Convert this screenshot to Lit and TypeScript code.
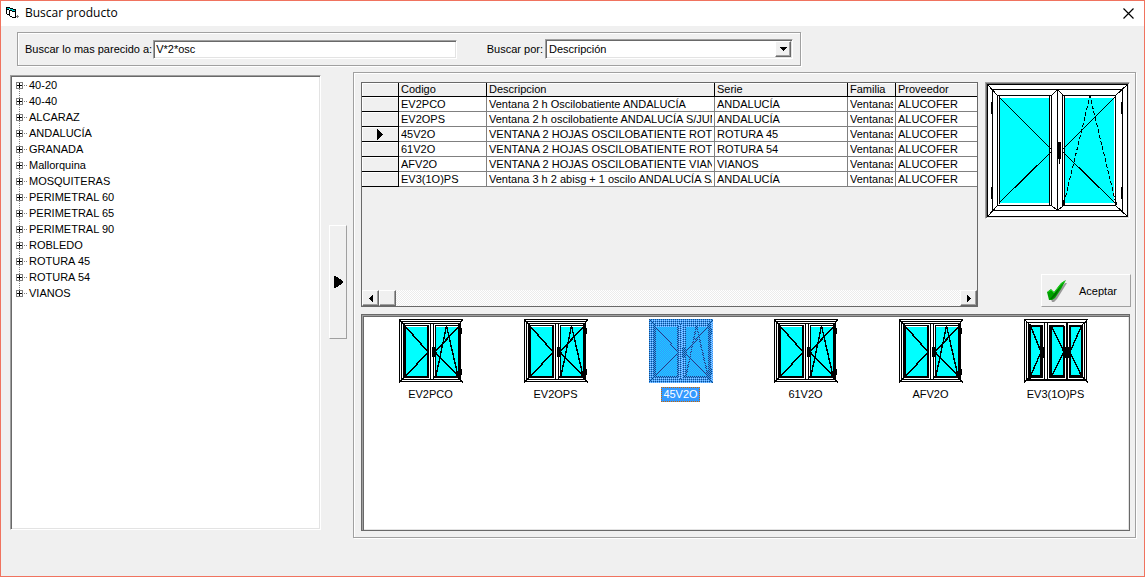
import { LitElement, html, svg, css } from "lit";
import { customElement, property, state } from "lit/decorators.js";
import { classMap } from "lit/directives/class-map.js";

interface Producto {
  codigo: string;
  descripcion: string;
  serie: string;
  familia: string;
  proveedor: string;
  hojas: 2 | 3;
}

const SERIES = [
  "40-20", "40-40", "ALCARAZ", "ANDALUCÍA", "GRANADA", "Mallorquina", "MOSQUITERAS",
  "PERIMETRAL 60", "PERIMETRAL 65", "PERIMETRAL 90", "ROBLEDO", "ROTURA 45", "ROTURA 54", "VIANOS",
];

const PRODUCTOS: Producto[] = [
  { codigo: "EV2PCO", descripcion: "Ventana 2 h Oscilobatiente ANDALUCÍA", serie: "ANDALUCÍA", familia: "Ventanas", proveedor: "ALUCOFER", hojas: 2 },
  { codigo: "EV2OPS", descripcion: "Ventana 2 h oscilobatiente ANDALUCÍA S/JUN", serie: "ANDALUCÍA", familia: "Ventanas", proveedor: "ALUCOFER", hojas: 2 },
  { codigo: "45V2O", descripcion: "VENTANA 2 HOJAS OSCILOBATIENTE ROTU", serie: "ROTURA 45", familia: "Ventanas", proveedor: "ALUCOFER", hojas: 2 },
  { codigo: "61V2O", descripcion: "VENTANA 2 HOJAS OSCILOBATIENTE ROTU", serie: "ROTURA 54", familia: "Ventanas", proveedor: "ALUCOFER", hojas: 2 },
  { codigo: "AFV2O", descripcion: "VENTANA 2 HOJAS OSCILOBATIENTE VIAN", serie: "VIANOS", familia: "Ventanas", proveedor: "ALUCOFER", hojas: 2 },
  { codigo: "EV3(1O)PS", descripcion: "Ventana 3 h 2 abisg + 1 oscilo ANDALUCÍA S/", serie: "ANDALUCÍA", familia: "Ventanas", proveedor: "ALUCOFER", hojas: 3 },
];

/** Small 64x64 elevation of a window with two or three leaves. */
@customElement("window-thumb")
export class WindowThumb extends LitElement {
  @property({ type: Number }) hojas = 2;
  @property({ type: Boolean, reflect: true }) selected = false;

  static styles = css`
    :host { display: block; position: relative; width: 64px; height: 64px; }
    svg { display: block; }
    :host([selected])::after {
      content: "";
      position: absolute;
      inset: 0;
      background:
        repeating-conic-gradient(#39f 0 25%, transparent 0 50%) 0 0 / 2px 2px,
        rgb(51 153 255 / 0.5);
    }
  `;

  private dosHojas() {
    return svg`
      <path fill="#0ff" d="M7 8h22v49H7zM37 8h22v49H37z"/>
      <path d="M0 0h64v1H0zM1 2h62v1H1zM4 4h56v1H4zM6 6h24v1H6zM36 6h24v1H36z
        M0 0h1v63H0zM2 2h1v59H2zM4 4h2v55H4zM6 6h1v51H6z
        M28 6h2v52h-2zM31 4h1v57h-1zM34 4h1v57h-1zM36 6h1v52h-1z
        M59 6h2v54h-2zM61 2h1v59h-1zM62 9h1v6h-1zM62 50h1v6h-1z
        M5 57h25v2H5zM35 57h26v2H35zM2 60h60v1H2zM1 62h61v1H1z
        M33 28h3v10h-3z"/>
      <path fill="none" stroke="#000" stroke-width="1.5" d="M7 8L29 33 7 57M59 8L36 33 59 57M0 0L6 7M64 0L59 7M0 64L6 57M64 64L59 57"/>
      <path fill="none" stroke="#000" stroke-width="1.4" d="M37 57L47.5 7 59 57"/>`;
  }

  private tresHojas() {
    return svg`
      <path fill="#0ff" d="M7 8h9v48H7zM28 8h11v48H28zM47 8h10v48H47z"/>
      <path d="M0 0h64v1H0zM2 3h60v1H2zM5 6h14v1H5zM25 6h15v1H25zM45 6h14v1H45zM6 7h11v1H6zM27 7h12v1H27zM46 7h12v1H46z
        M0 0h1v63H0zM2 2h1v59H2zM4 5h3v55H4zM16 7h3v52h-3zM20 4h1v57h-1zM23 4h1v57h-1zM25 6h3v53h-3z
        M39 7h2v52h-2zM42 4h2v57h-2zM45 6h2v53h-2zM57 6h2v53h-2zM60 4h1v56h-1zM62 2h1v59h-1z
        M5 56h14v3H5zM25 56h16v3H25zM45 56h14v3H45zM2 60h60v2H2z
        M17 28h3v11h-3zM39 28h3v11h-3zM44 28h3v11h-3z"/>
      <path fill="none" stroke="#000" stroke-width="1.4" d="M7 8L17 33 7 56M28 8L40 33 28 56M57 8L46 33 57 56M0 0L6 6M64 0L58 6M0 64L6 57M64 64L58 57"/>`;
  }

  render() {
    return html`<svg width="64" height="64" viewBox="0 0 64 64" shape-rendering="crispEdges" aria-hidden="true">
      <path fill="#fff" d="M0 0h64v64H0z"/>
      ${this.hojas === 3 ? this.tresHojas() : this.dosHojas()}
    </svg>`;
  }
}

@customElement("app-root")
export class AppRoot extends LitElement {
  @state() private actual = 2;

  static styles = css`
    * { box-sizing: border-box; }
    :host {
      display: flex;
      flex-direction: column;
      min-height: 100vh;
      box-sizing: border-box;
      border: 1px solid #f0735f;
      background: #f0f0f0;
      color: #000;
      font: 11px/14px "Liberation Sans", Arial, sans-serif;
    }
    button, input, select { font: inherit; color: inherit; margin: 0; border-radius: 0; }
    button { padding: 0; border: 0; background: none; }
    svg { display: block; flex: none; }

    .titlebar { display: flex; align-items: center; gap: 6px; height: 25px; padding: 0 10px 1px 5px; background: #fff; }
    .title { flex: 1; margin: 0; font: 12px/16px "Open Sans", "Noto Sans", sans-serif; }

    .etched { border: 1px solid #a0a0a0; box-shadow: inset 1px 1px #fff, 1px 1px #fff; }
    .sunken {
      border: 1px solid;
      border-color: #a0a0a0 #fff #fff #a0a0a0;
      box-shadow: inset 1px 1px #696969, inset -1px -1px #e3e3e3;
      background: #fff;
    }
    .raised {
      border: 1px solid;
      border-color: #fff #696969 #696969 #fff;
      box-shadow: inset -1px -1px #a0a0a0;
      background: #f0f0f0;
    }
    .flat { border: 1px solid; border-color: #fff #a0a0a0 #a0a0a0 #fff; background: #f0f0f0; }

    .search { display: flex; align-items: center; width: 784px; max-width: calc(100% - 24px); height: 34px; margin: 6px 0 0 16px; padding: 0 7px; }
    .search label { flex: none; }
    .query { flex: 1; min-width: 0; height: 19px; margin: 0 30px 0 1px; padding: 0 2px; outline: none; }
    .combo { position: relative; width: 248px; margin-left: 2px; }
    .combo select { display: block; width: 100%; height: 20px; padding: 0 20px 0 3px; appearance: none; outline: none; }
    .drop { position: absolute; top: 2px; right: 2px; display: grid; place-items: center; width: 16px; height: 16px; pointer-events: none; }

    .body { flex: 1; display: flex; margin: 6px 8px 38px 9px; }
    .tree { width: 311px; margin: 3px 0 8px; padding: 1px; list-style: none; }
    .node { display: flex; height: 16px; line-height: 16px; }
    .node button { display: block; width: 17px; height: 16px; }
    .splitter { align-self: center; display: grid; place-items: center; width: 18px; height: 114px; margin: 0 6px 46px 8px; }

    .results { flex: 1; min-width: 0; display: flex; flex-direction: column; gap: 7px; padding: 9px 4px 6px 7px; }
    .upper { display: flex; gap: 7px; height: 225px; }
    .grid { flex: 1; min-width: 0; display: flex; flex-direction: column; border: 1px solid #696969; overflow: hidden; }
    table { width: 100%; table-layout: fixed; border-collapse: separate; border-spacing: 0; }
    th, td { height: 15px; padding: 0 2px; border: solid #808080; border-width: 0 1px 1px 0; background: #fff; font-weight: normal; text-align: left; }
    thead th { height: 14px; border-color: #000; background: #f0f0f0; box-shadow: inset 0 1px #fff; line-height: 13px; }
    th.mark { padding: 0; border-color: #000; background: #f0f0f0; box-shadow: inset 1px 1px #fff; }
    tr > :last-child { border-right: 0; }
    .mark svg { margin: auto; }
    .cell { overflow: hidden; white-space: nowrap; }
    .col-mark { width: 37px; }
    .col-codigo { width: 88px; }
    .col-desc { width: 228px; }
    .col-serie { width: 133px; }
    .col-familia { width: 48px; }
    .scroll {
      display: flex;
      height: 16px;
      margin-top: auto;
      background: repeating-conic-gradient(#fff 0 25%, #ececec 0 50%) 0 0 / 2px 2px;
    }
    .scroll > * { display: grid; place-items: center; width: 17px; height: 16px; }
    .scroll .right { margin-left: auto; }

    .side { display: flex; flex-direction: column; justify-content: space-between; width: 146px; }
    .preview { width: 145px; padding: 1px; }
    .accept { align-self: flex-end; display: flex; align-items: center; gap: 12px; width: 90px; height: 33px; padding: 0 5px; }

    .list { flex: 1; display: flex; flex-wrap: wrap; align-content: flex-start; margin-right: 1px; padding: 4px 0 0 6px; border: 1px solid #696969; box-shadow: inset 1px 1px #a0a0a0, inset 2px 2px #696969, inset -1px -1px #e3e3e3; background: #fff; }
    .item { display: flex; flex-direction: column; align-items: center; gap: 4px; width: 125px; height: 86px; outline: none; }
    .caption { padding: 0 1px; border: 1px solid transparent; line-height: 13px; }
    .selected .caption { border: 1px dotted #cc6600; background: #39f; color: #fff; }
  `;

  private formIcon() {
    return html`<svg width="13" height="12" viewBox="0 0 13 12" shape-rendering="crispEdges" aria-hidden="true">
      <path fill="#fff" d="M1 1h3l1 1h5v7H5L1 7z"/>
      <path fill="#0cc" d="M1 1h3v1H1zM4 2h3v1H4zM6 3h3v1H6z"/>
      <path d="M0 0h4v1H0zM4 1h3v1H4zM7 2h3v1H7zM0 0h1v7H0zM1 7h2v1H1zM1 2h2v1H1zM9 3h1v8H9zM3 3h3v1H3zM6 4h3v1H6zM3 3h1v6H3zM4 9h2v1H4zM6 10h4v1H6z"/>
      <path fill="#777" d="M11 8h1v3h-1zM10 9h3v1h-3z"/>
    </svg>`;
  }

  private expander(first: boolean, last: boolean) {
    return html`<svg width="17" height="16" viewBox="0 0 17 16" shape-rendering="crispEdges" aria-hidden="true">
      <path stroke="#808080" stroke-dasharray="1 1" d="M7.5 ${first ? 8 : 0}V${last ? 8 : 16}M12 8.5h4"/>
      <path fill="#fff" stroke="#808080" d="M4.5 5.5h6v6h-6z"/>
      <path d="M5 8h5v1H5zM7 6h1v5H7z"/>
    </svg>`;
  }

  private arrow(d: string, w: number, h: number) {
    return html`<svg width=${w} height=${h} viewBox="0 0 ${w} ${h}" shape-rendering="crispEdges" aria-hidden="true"><path d=${d}/></svg>`;
  }

  private preview() {
    return html`<svg width="141" height="133" viewBox="0 0 141 133" shape-rendering="crispEdges" role="img" aria-label="Ventana de dos hojas">
      <path fill="#fff" d="M0 0h141v133H0z"/>
      <path fill="#0ff" d="M13 14h49v105H13zM78 14h49v105H78z"/>
      <g fill="none" stroke="#000">
        <path d="M.5 .5h140v132H.5zM5.5 5.5h130v121H5.5zM70.5 5v122"/>
        <path d="M10.5 11.5h54v110h-54zM12.5 11.5h50v107M12.5 11.5v108M62.5 11.5v110M75.5 11.5h53v110h-53zM77.5 11.5v110M10 121.5h55"/>
        <path d="M0 0l11 12M141 0l-13 12M0 133l11-12M141 133l-13-12M70.5 5.5l-6 6M70.5 5.5l6 6M70.5 126.5l-6-5M70.5 126.5l6-5"/>
        <path d="M12 13l52 52M64 68l-52 51M128 13L76 65M76 68l52 51"/>
        <path stroke-dasharray="4 2" d="M77 119l26-107 26 108"/>
      </g>
      <path d="M70 58h4v17h-4zM72 75h1v5h-1zM4 18h2v12H4zM4 103h2v12H4zM134 18h2v12h-2zM134 103h2v12h-2zM76 116h2v5h-2zM128 118h2v3h-2z"/>
    </svg>`;
  }

  private check() {
    return html`<svg width="20" height="22" viewBox="0 0 20 22" aria-hidden="true">
      <path fill="#999" d="M2 14l4-3 3 3 9-11h2l-5 8-5 8-3 3H5z"/>
      <path fill="#00a000" d="M0 12l4-3 3 3L14 3l5-3-5 9-6 9-3 2H2z"/>
      <path fill="none" stroke="#20d820" d="M1 12l3-2 3 3 7-9 4-3"/>
      <path fill="#007000" d="M7 14l7-8-5 9-4 4H3z"/>
    </svg>`;
  }

  render() {
    return html`
      <header class="titlebar">
        ${this.formIcon()}
        <h1 class="title">Buscar producto</h1>
        <button type="button" aria-label="Cerrar">
          <svg width="11" height="11" viewBox="0 0 11 11"><path stroke="#000" stroke-width="1.2" d="M.5 .5l10 10M10.5 .5l-10 10"/></svg>
        </button>
      </header>

      <form class="search etched" @submit=${(e: Event) => e.preventDefault()}>
        <label for="texto">Buscar lo mas parecido a:</label>
        <input id="texto" class="query sunken" type="text" value="V*2*osc" autocomplete="off" spellcheck="false">
        <label for="campo">Buscar por:</label>
        <div class="combo">
          <select id="campo" class="sunken">
            <option>Descripción</option>
            <option>Codigo</option>
            <option>Serie</option>
          </select>
          <span class="drop raised">${this.arrow("M0 0h7v1H0zM1 1h5v1H1zM2 2h3v1H2zM3 3h1v1H3z", 7, 4)}</span>
        </div>
      </form>

      <main class="body">
        <ul class="tree sunken">
          ${SERIES.map((s, i) => html`<li class="node">
            <button type="button" aria-label="Expandir ${s}">${this.expander(i === 0, i === SERIES.length - 1)}</button>
            <span>${s}</span>
          </li>`)}
        </ul>
        <button class="splitter flat" type="button" aria-label="Mostrar panel">
          ${this.arrow("M0 0h2v1H0zM0 1h4v1H0zM0 2h5v1H0zM0 3h7v1H0zM0 4h8v1H0zM0 5h9v2H0zM0 7h8v1H0zM0 8h7v1H0zM0 9h5v1H0zM0 10h4v1H0zM0 11h2v1H0z", 9, 12)}
        </button>

        <section class="results etched">
          <div class="upper">
            <div class="grid">
              <table>
                <colgroup>
                  <col class="col-mark"><col class="col-codigo"><col class="col-desc"><col class="col-serie"><col class="col-familia"><col>
                </colgroup>
                <thead>
                  <tr>
                    <th class="mark"></th>
                    ${["Codigo", "Descripcion", "Serie", "Familia", "Proveedor"].map((t) => html`<th scope="col">${t}</th>`)}
                  </tr>
                </thead>
                <tbody>
                  ${PRODUCTOS.map((p, i) => html`<tr @click=${() => (this.actual = i)}>
                    <th class="mark" scope="row">${i === this.actual
                      ? this.arrow("M0 0h1v11H0zM1 1h1v9H1zM2 2h1v7H2zM3 3h1v5H3zM4 4h1v3H4zM5 5h1v1H5z", 6, 11)
                      : null}</th>
                    ${[p.codigo, p.descripcion, p.serie, p.familia, p.proveedor].map((t) => html`<td><div class="cell">${t}</div></td>`)}
                  </tr>`)}
                </tbody>
              </table>
              <div class="scroll">
                <button class="raised" type="button" aria-label="Desplazar a la izquierda">${this.arrow("M3 0h1v7H3zM2 1h1v5H2zM1 2h1v3H1zM0 3h1v1H0z", 4, 7)}</button>
                <span class="raised"></span>
                <button class="raised right" type="button" aria-label="Desplazar a la derecha">${this.arrow("M0 0h1v7H0zM1 1h1v5H1zM2 2h1v3H2zM3 3h1v1H3z", 4, 7)}</button>
              </div>
            </div>
            <aside class="side">
              <div class="preview sunken">${this.preview()}</div>
              <button class="accept flat" type="button">${this.check()}<span>Aceptar</span></button>
            </aside>
          </div>

          <div class="list">
            ${PRODUCTOS.map((p, i) => html`<button type="button"
              class=${classMap({ item: true, selected: i === this.actual })}
              @click=${() => (this.actual = i)}>
              <window-thumb .hojas=${p.hojas} .selected=${i === this.actual}></window-thumb>
              <span class="caption">${p.codigo}</span>
            </button>`)}
          </div>
        </section>
      </main>
    `;
  }
}
